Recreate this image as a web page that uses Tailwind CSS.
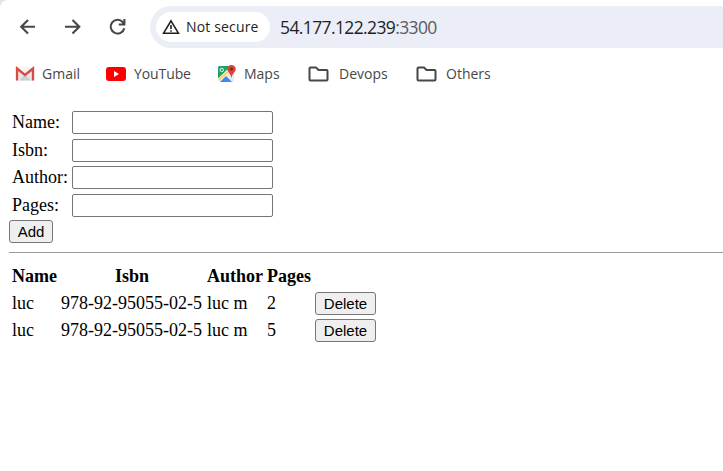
<!DOCTYPE html>
<html lang="en">
<head>
<meta charset="utf-8">
<title>54.177.122.239:3300</title>
<script src="https://cdn.jsdelivr.net/npm/@tailwindcss/browser@4"></script>
</head>
<body class="bg-[#dfe5f0] w-[723px] h-[471px] overflow-hidden">
<div class="bg-white rounded-tl-[8px] h-full flex flex-col font-['Open_Sans','Noto_Sans',sans-serif]">
  <header class="pt-[6px] h-[103px] shrink-0">
    <div class="flex h-[42px] items-center">
      <div class="flex w-[150px] shrink-0 pl-[17px] gap-[23px] text-[#474747]">
        <svg class="size-[22px]" viewBox="0 0 22 22" fill="none" stroke="currentColor" stroke-width="2.1"><path d="M18 10.7H4.5M11 3.9 4.2 10.7 11 17.5"/></svg>
        <svg class="size-[22px]" viewBox="0 0 22 22" fill="none" stroke="currentColor" stroke-width="2.1"><path d="M3 10.7H16.5M10.5 3.9 17.3 10.7 10.500 17.5"/></svg>
        <svg class="size-[22px]" viewBox="0 0 22 22" fill="none" stroke="currentColor" stroke-width="2.1"><path d="M17.3 12.2A6.9 6.9 0 1 1 15.7 6L17.2 8M17.4 3V8.5H11.8"/></svg>
      </div>
      <div class="flex flex-1 h-[42px] items-center rounded-l-full bg-[#ebeef7] pl-[6px]">
        <div class="flex h-[30px] w-[114px] items-center rounded-full bg-white pl-[6px] text-[#1f1f1f]">
          <svg class="w-[18px] h-[16px] shrink-0" viewBox="0 0 18 16" fill="none" stroke="currentColor" stroke-width="1.6"><path d="M9 1.900 16.400 14.200H1.600Z"/><path d="M9 6V10M9 11.200V12.800"/></svg>
          <span class="ml-[6px] mt-[-2px] text-[14px] tracking-[0.16px] font-medium whitespace-nowrap">Not secure</span>
        </div>
        <span class="ml-[10px] text-[17.5px] tracking-[-0.62px] text-[#1f1f1f] whitespace-nowrap">54.177.122.239<span class="text-[#5a5b60]">:3300</span></span>
      </div>
    </div>
    <nav class="flex h-[52px] items-center text-[14px] text-[#474747] whitespace-nowrap">
      <div class="flex items-center w-[91px] pl-[15px] shrink-0">
        <svg class="w-[20px] h-[16px]" viewBox="0 0 20 16"><path fill="#e8e8e8" d="M1 1.5H19V14.5H1Z"/><path fill="#cfcfcf" d="m4 14.5 6-6 6 6Z"/><path fill="#f5f5f5" d="M3 2H17L10 8Z"/><path fill="none" stroke="#d94b40" stroke-width="2.300" d="M2 14.5V2.5L10 9 18 2.5V14.5"/></svg>
        <span class="ml-[7px] mt-[-2px]">Gmail</span>
      </div>
      <div class="flex items-center w-[110px] pl-[15px] shrink-0">
        <svg class="w-[20px] h-[14px]" viewBox="0 0 20 14"><rect width="20" height="14" rx="3" fill="#f00"/><path fill="#fff" d="M8 4V10L13 7Z"/></svg>
        <span class="ml-[8px] mt-[-2px] tracking-[-0.1px]">YouTube</span>
      </div>
      <div class="flex items-center w-[92px] pl-[16px] shrink-0">
        <svg class="w-[19px] h-[19px] mt-[-2px]" viewBox="0 0 19 19"><rect x="1" y="2" width="16" height="16" rx="1.5" fill="#e8eaed"/><path fill="#1ea362" d="M1 3.5Q1 2 2.500 2H14L1 16.500Z"/><path fill="#fff" d="M1 14.500 12.500 3.500 14.500 6 2.500 18H1Z"/><path fill="#4285f4" d="M3 18 9 12 15 18Z"/><path fill="#ffd34f" d="M1.500 15 10 7 11.500 8.500 2 17.500Z"/><circle cx="4.800" cy="6" r="1.700" fill="none" stroke="#fff" stroke-width=".9"/><path fill="#dc4437" d="M14.500 1C12 1 10.200 2.800 10.200 5.100 10.200 8 13.500 9 14.500 14 15.500 9 18.800 8 18.800 5.100 18.800 2.800 17 1 14.500 1Z"/><circle cx="14.500" cy="5" r="1.500" fill="#7b231c"/></svg>
        <span class="ml-[8px] mt-[-2px]">Maps</span>
      </div>
      <div class="flex items-center w-[108px] pl-[15px] shrink-0">
        <svg class="w-[21px] h-[16px]" viewBox="0 0 21 16" fill="none" stroke="currentColor" stroke-width="2"><path d="M2.500 1.500H8L10.500 4H18.500Q19.500 4 19.500 5V13.500Q19.500 14.500 18.500 14.500H2.500Q1.500 14.500 1.500 13.500V2.500Q1.500 1.500 2.500 1.500Z"/></svg>
        <span class="ml-[10px] mt-[-2px]">Devops</span>
      </div>
      <div class="flex items-center pl-[15px] shrink-0">
        <svg class="w-[21px] h-[16px]" viewBox="0 0 21 16" fill="none" stroke="currentColor" stroke-width="2"><path d="M2.500 1.500H8L10.500 4H18.500Q19.500 4 19.500 5V13.500Q19.500 14.500 18.500 14.500H2.500Q1.500 14.500 1.500 13.500V2.500Q1.500 1.500 2.500 1.500Z"/></svg>
        <span class="ml-[9px] mt-[-2px]">Others</span>
      </div>
    </nav>
  </header>
  <main class="pl-[9px] pt-[8px] font-['Liberation_Serif',serif] text-[18px] leading-[23px] text-black">
    <form>
      <div class="grid grid-cols-[60px_201px] grid-rows-[28px_27px_28px_23px] pl-[3px] items-start">
        <label for="name">Name:</label><input id="name" class="h-[23px] border border-[#767676] rounded-[2px]">
        <label for="isbn">Isbn:</label><input id="isbn" class="h-[23px] border border-[#767676] rounded-[2px]">
        <label for="author">Author:</label><input id="author" class="h-[23px] border border-[#767676] rounded-[2px]">
        <label for="pages">Pages:</label><input id="pages" class="h-[23px] border border-[#767676] rounded-[2px]">
      </div>
      <button type="button" class="block mt-[3px] w-[44px] h-[23px] border border-[#767676] rounded-[3px] bg-[#efefef] font-['Liberation_Sans',sans-serif] text-[15px] leading-[21px]">Add</button>
    </form>
    <hr class="mt-[9px] border-t border-[#9a9a9a]">
    <div class="grid grid-cols-[49px_146px_60px_48px_61px] grid-rows-[23px_23px_23px] gap-y-[4px] mt-[12px] pl-[3px] items-center whitespace-nowrap">
      <b>Name</b><b class="w-[142px] text-center">Isbn</b><b>Author</b><b>Pages</b><span></span>
      <span>luc</span><span>978-92-95055-02-5</span><span>luc m</span><span>2</span><button type="button" class="h-[23px] border border-[#767676] rounded-[3px] bg-[#efefef] font-['Liberation_Sans',sans-serif] text-[15px] leading-[21px]">Delete</button>
      <span>luc</span><span>978-92-95055-02-5</span><span>luc m</span><span>5</span><button type="button" class="h-[23px] border border-[#767676] rounded-[3px] bg-[#efefef] font-['Liberation_Sans',sans-serif] text-[15px] leading-[21px]">Delete</button>
    </div>
  </main>
</div>
</body>
</html>
